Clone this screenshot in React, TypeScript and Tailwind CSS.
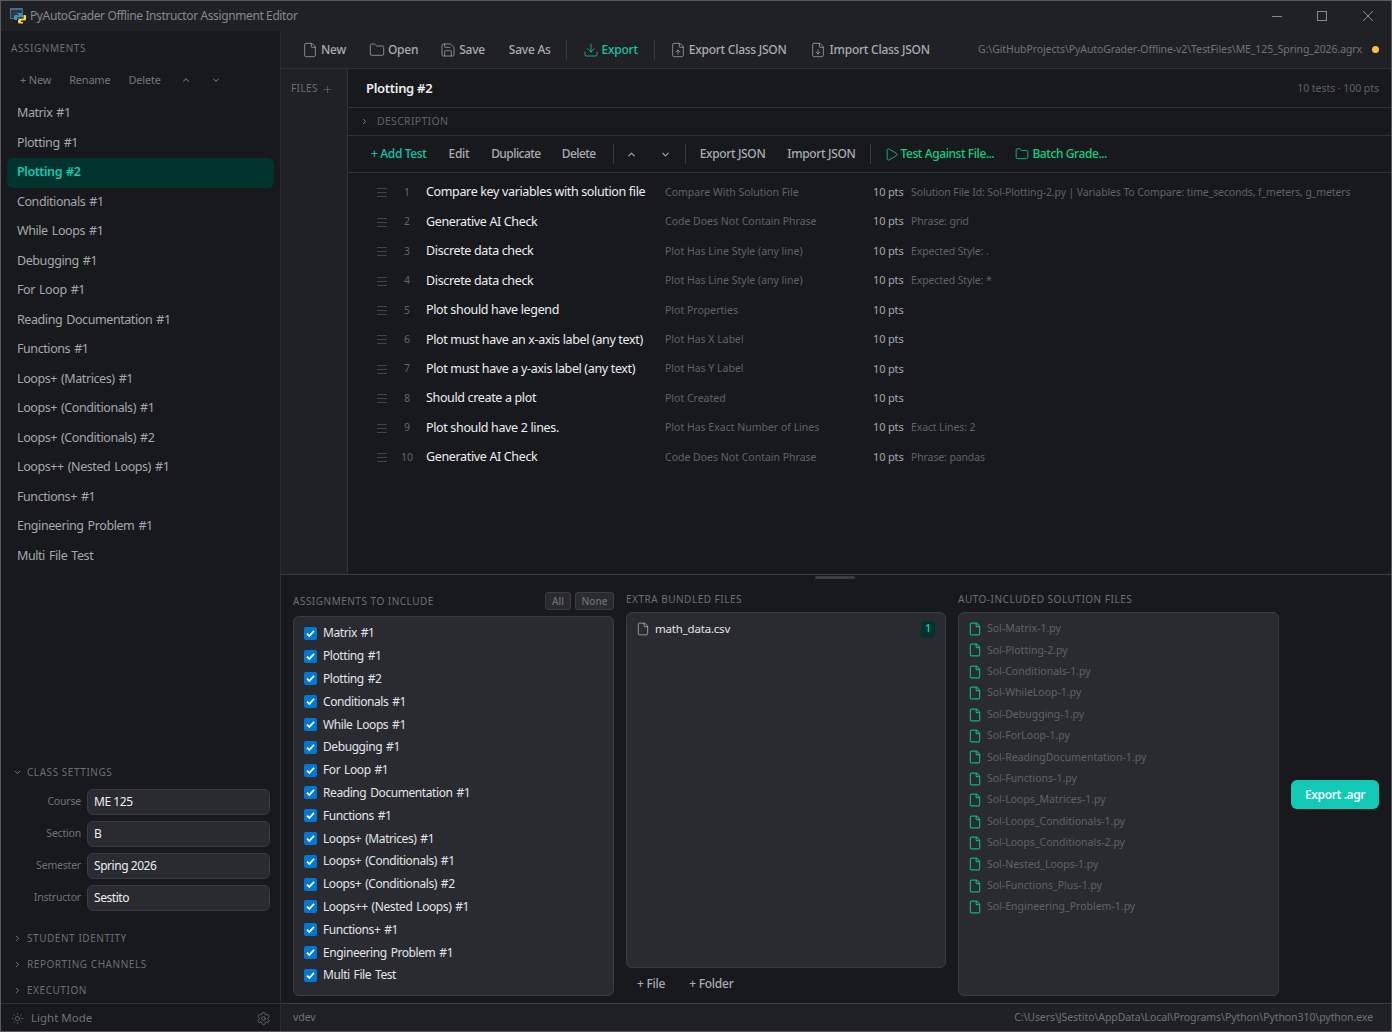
import { ChevronDown, ChevronRight, ChevronUp, Download, File, FileDown, FileUp, Folder, Play, Plus, Save, Settings, Sun } from 'lucide-react';

const assignments = ['Matrix #1', 'Plotting #1', 'Plotting #2', 'Conditionals #1', 'While Loops #1', 'Debugging #1', 'For Loop #1', 'Reading Documentation #1', 'Functions #1', 'Loops+ (Matrices) #1', 'Loops+ (Conditionals) #1', 'Loops+ (Conditionals) #2', 'Loops++ (Nested Loops) #1', 'Functions+ #1', 'Engineering Problem #1', 'Multi File Test'];

const tests = [
  ['Compare key variables with solution file', 'Compare With Solution File', 'Solution File Id: Sol-Plotting-2.py | Variables To Compare: time_seconds, f_meters, g_meters'],
  ['Generative AI Check', 'Code Does Not Contain Phrase', 'Phrase: grid'],
  ['Discrete data check', 'Plot Has Line Style (any line)', 'Expected Style: .'],
  ['Discrete data check', 'Plot Has Line Style (any line)', 'Expected Style: *'],
  ['Plot should have legend', 'Plot Properties', ''],
  ['Plot must have an x-axis label (any text)', 'Plot Has X Label', ''],
  ['Plot must have a y-axis label (any text)', 'Plot Has Y Label', ''],
  ['Should create a plot', 'Plot Created', ''],
  ['Plot should have 2 lines.', 'Plot Has Exact Number of Lines', 'Exact Lines: 2'],
  ['Generative AI Check', 'Code Does Not Contain Phrase', 'Phrase: pandas'],
];

const solutionFiles = ['Sol-Matrix-1.py', 'Sol-Plotting-2.py', 'Sol-Conditionals-1.py', 'Sol-WhileLoop-1.py', 'Sol-Debugging-1.py', 'Sol-ForLoop-1.py', 'Sol-ReadingDocumentation-1.py', 'Sol-Functions-1.py', 'Sol-Loops_Matrices-1.py', 'Sol-Loops_Conditionals-1.py', 'Sol-Loops_Conditionals-2.py', 'Sol-Nested_Loops-1.py', 'Sol-Functions_Plus-1.py', 'Sol-Engineering_Problem-1.py'];

const settings = [['Course', 'ME 125'], ['Section', 'B'], ['Semester', 'Spring 2026'], ['Instructor', 'Sestito']];

function PythonIcon() {
  return (
    <svg width="16" height="16" viewBox="0 0 16 16">
      <rect x="0" y="0" width="13" height="11" fill="#3d6d8c" />
      <rect x="1" y="2" width="11" height="8" fill="#2b3a42" />
      <path d="M8 5h3a1.5 1.5 0 0 1 1.5 1.5V9H8.5A1.5 1.5 0 0 0 7 10.5V12H5.5A1.5 1.5 0 0 1 4 10.5V8.5A1.5 1.5 0 0 1 5.5 7H9V6H7V5z" fill="#4b8bbe" />
      <path d="M13.5 7H15a1 1 0 0 1 1 1v3a1.5 1.5 0 0 1-1.5 1.5H11V14h2v1.5H9.5A1.5 1.5 0 0 1 8 14v-1.5A1.5 1.5 0 0 1 9.5 11h4z" fill="#ffd43b" />
    </svg>
  );
}

function Grip() {
  return (
    <svg width="10" height="9" viewBox="0 0 10 9" className="shrink-0">
      <path d="M0 .5h10M0 4.5h10M0 8.5h10" stroke="#414349" strokeWidth="1" />
    </svg>
  );
}

function SectionHead({ label, open }: { label: string; open?: boolean }) {
  return (
    <div className="flex items-center gap-[5px] pl-[12px] h-[26px] text-[10px] tracking-[0.55px] text-[#6b6f76]">
      {open ? <ChevronDown size={9} strokeWidth={2.5} className="text-[#7a7e85]" /> : <ChevronRight size={9} strokeWidth={2.5} className="text-[#7a7e85]" />}
      <span>{label}</span>
    </div>
  );
}

function Divider() {
  return <div className="w-px h-[20px] bg-[#3a3c41] shrink-0" />;
}

function Sidebar() {
  return (
    <aside className="w-[280px] shrink-0 flex flex-col bg-[#18191d] border-r border-[#2c2e33]">
      <div className="pl-[10px] pt-[10px] h-[34px] text-[10px] tracking-[0.55px] text-[#6b6f76]">ASSIGNMENTS</div>
      <div className="flex items-center h-[34px] pb-[4px] pl-[19px] text-[11px] tracking-[-0.2px] text-[#72767d]">
        <span className="mr-[18px]">+ New</span>
        <span className="mr-[18px]">Rename</span>
        <span className="mr-[20px]">Delete</span>
        <ChevronUp size={10} strokeWidth={2.5} className="mr-[20px]" />
        <ChevronDown size={10} strokeWidth={2.5} />
      </div>
      <div className="px-[6px] flex flex-col">
        {assignments.map((a, i) => (
          <div key={i} className={`h-[29.5px] flex items-center pl-[10px] rounded-md text-[12.5px] tracking-[-0.42px] [word-spacing:1.2px] ${i === 2 ? 'bg-[#02332f] text-[#12c9ad] font-semibold' : 'text-[#a4a7ac]'}`}>{a}</div>
        ))}
      </div>
      <div className="flex-1" />
      <SectionHead label="CLASS SETTINGS" open />
      <div className="flex flex-col gap-[6px] pr-[10px] pt-[4px] pb-[14px]">
        {settings.map(([label, value]) => (
          <div key={label} className="flex items-center gap-[6px]">
            <span className="w-[80px] text-right text-[10.5px] tracking-[-0.2px] text-[#6f7278]">{label}</span>
            <div className="flex-1 h-[26px] flex items-center px-[6px] rounded-md bg-[#2a2b30] border border-[#3a3c41] text-[12px] tracking-[-0.45px] text-[#eceef0]">{value}</div>
          </div>
        ))}
      </div>
      <SectionHead label="STUDENT IDENTITY" />
      <SectionHead label="REPORTING CHANNELS" />
      <SectionHead label="EXECUTION" />
      <div className="h-[28px] flex items-center justify-between pl-[10px] pr-[9px] pt-[1px] border-t border-[#2f3136] text-[11.5px] text-[#6f7278]">
        <div className="flex items-center gap-[7px]">
          <Sun size={13} strokeWidth={1.3} />
          <span>Light Mode</span>
        </div>
        <Settings size={15} strokeWidth={1.3} />
      </div>
    </aside>
  );
}

function ToolBtn({ icon, label, color = 'text-[#a9acb1]', className = '' }: { icon?: React.ReactNode; label: string; color?: string; className?: string }) {
  return (
    <span className={`flex items-center font-medium ${color} ${className}`}>
      {icon}
      {label}
    </span>
  );
}

function Toolbar() {
  return (
    <div className="h-[38px] shrink-0 flex items-center pl-[21px] pr-[12px] bg-[#202124] border-b border-[#2f3136] text-[12px] tracking-[-0.25px]">
      <ToolBtn icon={<File size={16} strokeWidth={1.1} />} label="New" className="gap-[3px] mr-[23px]" />
      <ToolBtn icon={<Folder size={16} strokeWidth={1.1} />} label="Open" className="gap-[3px] mr-[22px]" />
      <ToolBtn icon={<Save size={16} strokeWidth={1.1} />} label="Save" className="gap-[3px] mr-[24px]" />
      <ToolBtn label="Save As" className="mr-[15px]" />
      <Divider />
      <ToolBtn icon={<Download size={16} strokeWidth={1.2} />} label="Export" color="text-[#14c4aa]" className="gap-[3px] ml-[16px] mr-[16px]" />
      <Divider />
      <ToolBtn icon={<FileUp size={16} strokeWidth={1.1} />} label="Export Class JSON" className="gap-[3px] ml-[15px] mr-[23px]" />
      <ToolBtn icon={<FileDown size={16} strokeWidth={1.1} />} label="Import Class JSON" className="gap-[4px]" />
      <div className="flex-1" />
      <span className="text-[10.5px] tracking-[-0.1px] text-[#6f7278] mr-[10px]">G:\GitHubProjects\PyAutoGrader-Offline-v2\TestFiles\ME_125_Spring_2026.agrx</span>
      <span className="w-[7px] h-[7px] rounded-full bg-[#fbbf3c]" />
    </div>
  );
}

function TestRow({ n, row }: { n: number; row: string[] }) {
  return (
    <div className="h-[29.45px] flex items-center text-[11px]">
      <div className="w-[30px] pl-[29px]"><Grip /></div>
      <span className="w-[48px] pl-[10px] text-center text-[#62656b] text-[10.5px]">{n}</span>
      <span className="w-[239px] text-[12.5px] tracking-[-0.35px] text-[#eceef0] whitespace-nowrap">{row[0]}</span>
      <span className="w-[208px] text-[#5f6268] text-[10.5px]">{row[1]}</span>
      <span className="w-[38px] pb-[1px] text-[#a4a7ac] text-[11px] tracking-[-0.15px] whitespace-nowrap">10 pts</span>
      <span className="text-[#5f6268] text-[10.5px] tracking-[-0.12px] whitespace-nowrap">{row[2]}</span>
    </div>
  );
}

function Editor() {
  return (
    <div className="flex-1 min-w-0 flex flex-col bg-[#18191d]">
      <div className="h-[39px] shrink-0 flex items-center justify-between pt-[1px] pl-[18px] pr-[12px] border-b border-[#2f3136]">
        <span className="text-[13px] font-semibold tracking-[-0.3px] text-[#eceef0]">Plotting #2</span>
        <span className="text-[10.5px] tracking-[-0.05px] text-[#5f6268]">10 tests · 100 pts</span>
      </div>
      <div className="h-[28px] shrink-0 flex items-center gap-[8px] pl-[12px] border-b border-[#2f3136] text-[10.5px] tracking-[0.3px] text-[#5f6268]">
        <ChevronRight size={9} strokeWidth={2.5} className="text-[#7a7e85]" />
        DESCRIPTION
      </div>
      <div className="h-[37px] shrink-0 flex items-center pl-[23px] border-b border-[#2f3136] text-[12px] tracking-[-0.35px]">
        <ToolBtn label="+ Add Test" color="text-[#14c4aa]" className="mr-[22px]" />
        <ToolBtn label="Edit" className="mr-[22px]" />
        <ToolBtn label="Duplicate" className="mr-[21px] tracking-[-0.55px]" />
        <ToolBtn label="Delete" className="mr-[17px] tracking-[-0.55px]" />
        <Divider />
        <ChevronUp size={11} strokeWidth={2.2} className="text-[#a9acb1] ml-[12px] mr-[23px]" />
        <ChevronDown size={11} strokeWidth={2.2} className="text-[#a9acb1] mr-[14px]" />
        <Divider />
        <ToolBtn label="Export JSON" className="ml-[14px] mr-[22px]" />
        <ToolBtn label="Import JSON" className="mr-[14px]" />
        <Divider />
        <ToolBtn icon={<Play size={15} strokeWidth={1.3} />} label="Test Against File..." color="text-[#10d080]" className="gap-[2px] ml-[13px] mr-[21px] tracking-[-0.42px]" />
        <ToolBtn icon={<Folder size={14} strokeWidth={1.4} />} label="Batch Grade..." color="text-[#10d080]" className="gap-[3px] tracking-[-0.42px]" />
      </div>
      <div className="pt-[5px]">
        {tests.map((t, i) => <TestRow key={i} n={i + 1} row={t} />)}
      </div>
    </div>
  );
}

function Check() {
  return (
    <span className="w-[13px] h-[13px] shrink-0 rounded-[2px] bg-[#0078d4] flex items-center justify-center">
      <svg width="9" height="9" viewBox="0 0 9 9"><path d="M1 4.7l2.3 2.3L8 1.8" fill="none" stroke="white" strokeWidth="1.8" /></svg>
    </span>
  );
}

function BundlePanel() {
  return (
    <div className="h-[429px] shrink-0 relative flex bg-[#18191d] border-t border-[#3a3c41] pl-[12px] pr-[12px]">
      <div className="absolute left-[534px] top-[1px] w-[40px] h-[3px] rounded-sm bg-[#3a3c41]" />
      <div className="w-[321px] shrink-0 flex flex-col mr-[12px] pt-[15px]">
        <div className="h-[22px] flex items-center justify-between text-[10px] tracking-[0.5px] text-[#6b6f76]">
          <span>ASSIGNMENTS TO INCLUDE</span>
          <div className="flex gap-[4px] tracking-normal">
            <span className="h-[18px] w-[26px] flex items-center justify-center rounded-[3px] bg-[#2a2b30] border border-[#3a3c41] font-medium">All</span>
            <span className="h-[18px] w-[39px] flex items-center justify-center rounded-[3px] bg-[#2a2b30] border border-[#3a3c41] font-medium">None</span>
          </div>
        </div>
        <div className="mt-[4px] h-[380px] rounded-md bg-[#2a2b30] border border-[#3a3c41] pl-[10px] pt-[5px]">
          {assignments.map((a) => (
            <div key={a} className="h-[22.8px] flex items-center gap-[6px] text-[12px] tracking-[-0.42px] [word-spacing:1.2px] text-[#e2e4e7]">
              <Check />
              <span>{a}</span>
            </div>
          ))}
        </div>
      </div>
      <div className="w-[320px] shrink-0 flex flex-col mr-[12px] pt-[14px]">
        <div className="h-[21px] mb-[2px] flex items-center text-[10px] tracking-[0.5px] text-[#6b6f76]">EXTRA BUNDLED FILES</div>
        <div className="h-[356px] rounded-md bg-[#2a2b30] border border-[#3a3c41] pl-[9px] pr-[10px] pt-[7px]">
          <div className="flex items-center gap-[5px] text-[11.5px] tracking-[-0.2px] text-[#e2e4e7]">
            <File size={14} strokeWidth={1.5} className="text-[#a4a7ac]" />
            <span className="flex-1">math_data.csv</span>
            <span className="w-[14px] h-[16px] rounded-[2px] bg-[#02332f] text-[#12c9ad] text-[10px] font-semibold flex items-center justify-center">1</span>
          </div>
        </div>
        <div className="flex items-center gap-[24px] pl-[11px] h-[32px] text-[12px] tracking-[-0.25px]">
          <ToolBtn label="+ File" />
          <ToolBtn label="+ Folder" />
        </div>
      </div>
      <div className="w-[321px] shrink-0 flex flex-col mr-[12px] pt-[14px]">
        <div className="h-[21px] mb-[2px] flex items-center text-[10px] tracking-[0.5px] text-[#6b6f76]">AUTO-INCLUDED SOLUTION FILES</div>
        <div className="h-[384px] rounded-md bg-[#2a2b30] border border-[#3a3c41] pl-[9px] pt-[5.4px]">
          {solutionFiles.map((f) => (
            <div key={f} className="h-[21.4px] flex items-center gap-[5px] text-[10.5px] text-[#5f6268]">
              <File size={14} strokeWidth={2} className="text-[#12b07c]" />
              <span>{f}</span>
            </div>
          ))}
        </div>
      </div>
      <div className="flex-1 flex items-center pt-[11px]">
        <span className="w-[88px] h-[29px] rounded-md bg-[#12c9b5] flex items-center justify-center text-[12px] font-semibold tracking-[-0.4px] text-[#eafffb]">Export .agr</span>
      </div>
    </div>
  );
}

export default function App() {
  return (
    <div className="w-[1392px] h-[1032px] flex flex-col overflow-hidden border border-[#5a5a5a] bg-[#18191d] font-['Noto_Sans','Open_Sans',sans-serif]">
      <div className="h-[30px] shrink-0 flex items-center pl-[9px] bg-[#202124] text-[12px] tracking-[-0.39px] text-[#85888d]">
        <PythonIcon />
        <span className="ml-[4px] flex-1">PyAutoGrader Offline Instructor Assignment Editor</span>
        <svg width="102" height="14" viewBox="0 0 102 14" className="mr-[17px] text-[#85888d]" fill="none" stroke="currentColor">
          <path d="M0 7.5h10" />
          <rect x="45.5" y="2.5" width="9" height="9" />
          <path d="M91 2l10 10M101 2L91 12" />
        </svg>
      </div>
      <div className="flex-1 min-h-0 flex">
        <Sidebar />
        <div className="flex-1 min-w-0 flex flex-col">
          <Toolbar />
          <div className="flex-1 min-h-0 flex">
            <div className="w-[67px] shrink-0 flex items-start gap-[4px] pl-[10px] pt-[12px] bg-[#202124] border-r border-[#2f3136] text-[10px] tracking-[0.4px] text-[#6b6f76]">
              <span>FILES</span>
              <Plus size={11} strokeWidth={1.4} className="mt-[3px]" />
            </div>
            <Editor />
          </div>
          <BundlePanel />
          <div className="h-[28px] shrink-0 flex items-center justify-between pt-[1px] pl-[12px] pr-[18px] bg-[#202124] border-t border-[#3a3c41] text-[10.5px] tracking-[-0.07px] text-[#6f7278]">
            <span>vdev</span>
            <span>C:\Users\JSestito\AppData\Local\Programs\Python\Python310\python.exe</span>
          </div>
        </div>
      </div>
    </div>
  );
}
